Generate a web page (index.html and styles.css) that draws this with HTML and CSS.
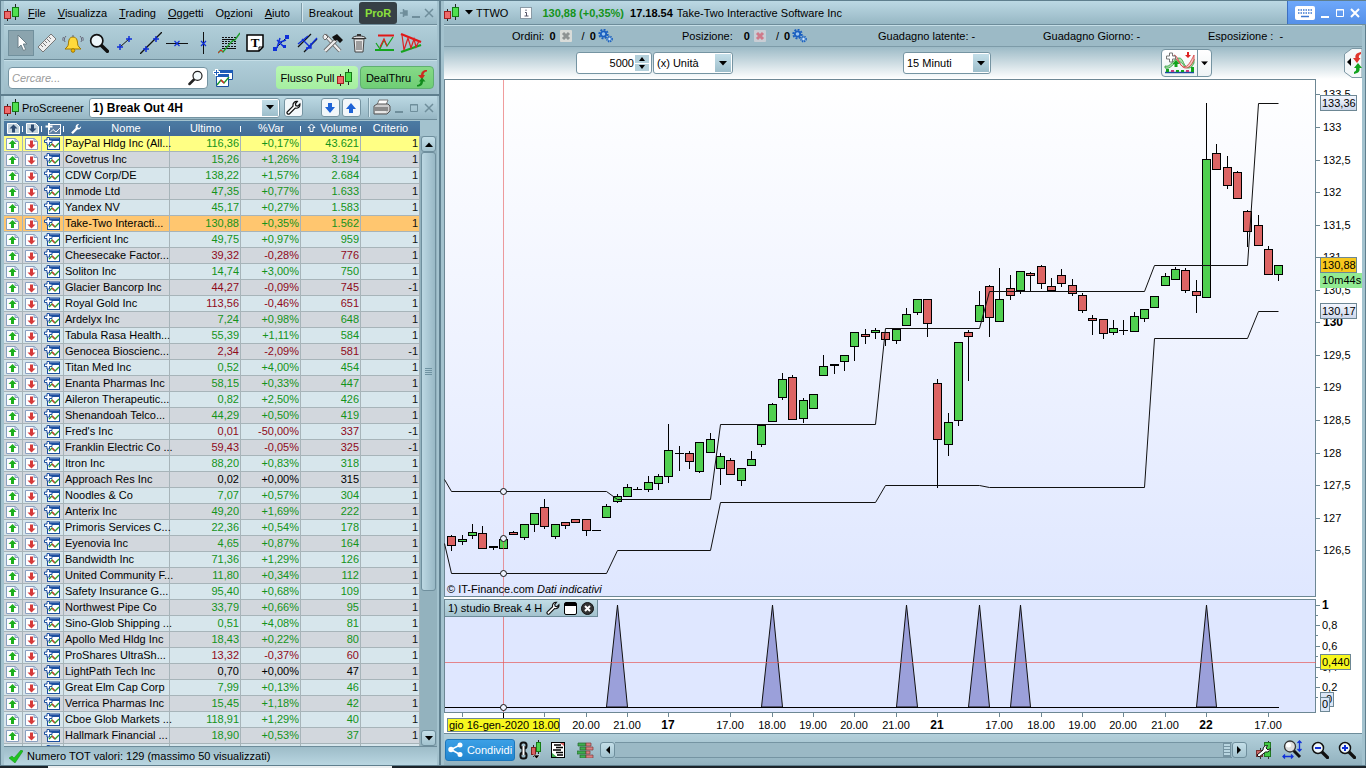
FILE: index.html
```html
<!DOCTYPE html>
<html lang="it">
<head>
  <meta charset="utf-8">
  <title>TTWO - Take-Two Interactive Software Inc</title>
  <link rel="stylesheet" href="styles.css">
</head>
<body>

  <!-- Icone condivise -->
  <svg class="defs" width="0" height="0">
    <symbol id="i-candles" viewBox="0 0 16 17">
      <path d="M3.500 5v12M11.500 0v16" stroke="#222"/>
      <rect x=".5" y="7.500" width="6" height="7" fill="#ef6a6a" stroke="#a02020"/>
      <rect x="8.500" y="3.500" width="6" height="9" fill="#4fe04f" stroke="#157a15"/>
    </symbol>
    <symbol id="i-up" viewBox="0 0 13 12">
      <path d="M.5.5h9l3 3v8H.5z" fill="#fff" stroke="#8aa0c0"/><path d="M9 .5v3h3.500" fill="#c8d6ea" stroke="#8aa0c0"/>
      <path d="M6.500 2l4 4H8v4H5V6H2.500z" fill="#1eae1e"/>
    </symbol>
    <symbol id="i-down" viewBox="0 0 13 12">
      <path d="M.5.5h9l3 3v8H.5z" fill="#fff" stroke="#8aa0c0"/><path d="M9 .5v3h3.500" fill="#c8d6ea" stroke="#8aa0c0"/>
      <path d="M6.500 10.500l4-4H8V2.500H5v4H2.500z" fill="#d63a3a"/>
    </symbol>
    <symbol id="i-add" viewBox="0 0 16 13">
      <rect x="3.500" y="1" width="12" height="11.500" fill="#fff" stroke="#1c4fa0"/>
      <path d="M4 1.500h11v2.500H4z" fill="#1c4fa0"/>
      <path d="M5 10l3-3 3 3 4-4" fill="none" stroke="#2aa02a" stroke-width="1.300"/><path d="M8 7l2.500 2.500" stroke="#d33" stroke-width="1.300"/>
      <path d="M3 .5h2.500v2.500H8v2.500H5.500V8H3V5.500H.5V3H3z" fill="#fff" stroke="#1c4fa0"/>
    </symbol>
    <symbol id="i-hup" viewBox="0 0 13 11">
      <path d="M.5.5h9l3 3v7H.5z" fill="#c3d3de" stroke="#fff"/><path d="M6.500 1.500l4 4H8v4H5v-4H2.500z" fill="#2c4a70"/>
    </symbol>
    <symbol id="i-hdown" viewBox="0 0 13 11">
      <path d="M.5.5h9l3 3v7H.5z" fill="#c3d3de" stroke="#fff"/><path d="M6.500 9.500l4-4H8v-4H5v4H2.500z" fill="#2c4a70"/>
    </symbol>
    <symbol id="i-hadd" viewBox="0 0 16 12">
      <rect x="3.500" y="1.500" width="12" height="10" fill="#5f7fa3" stroke="#fff"/>
      <path d="M5 9.500l3-3 3 2.500 4-4" fill="none" stroke="#fff"/><path d="M4 0v7M.5 3.500h7" stroke="#fff" stroke-width="2"/>
    </symbol>
    <symbol id="i-wrench" viewBox="0 0 16 16">
      <path d="M1.500 12.500l6-6C7 3.500 9 1.200 12 1.500L10 4l.5 2 2 .5 2.300-2.200C15.200 7 13 9.300 9.800 8.700l-6 6c-1.500 1.300-3.600-.7-2.300-2.200z" fill="#fff" stroke="#111" stroke-width="1.300"/>
    </symbol>
    <symbol id="i-lens" viewBox="0 0 18 18">
      <path d="M10.500 10.500l6 6" stroke="#111" stroke-width="3.200" stroke-linecap="round"/>
      <circle cx="7" cy="7" r="5.500" fill="#eef6fa" stroke="#111" stroke-width="1.500"/>
    </symbol>
    <symbol id="i-gears" viewBox="0 0 15 14">
      <circle cx="5.500" cy="5" r="4.300" fill="none" stroke="#1a5fc0" stroke-width="1.800" stroke-dasharray="2 1.300"/>
      <circle cx="5.500" cy="5" r="2.700" fill="#9cc6ef" stroke="#1a5fc0" stroke-width="1.800"/>
      <circle cx="11.500" cy="10" r="2.800" fill="none" stroke="#1a5fc0" stroke-width="1.200" stroke-dasharray="1.400 .9"/>
      <circle cx="11.500" cy="10" r="1.800" fill="#cfe6fa" stroke="#2a70cc"/>
    </symbol>
    <symbol id="i-caret" viewBox="0 0 8 5"><path d="M0 0h8L4 4.500z" fill="#000"/></symbol>
    <symbol id="i-redgreen" viewBox="0 0 12 20">
      <path d="M11 2C7 2 5 4 5 7H2l4 4.500L9 7H7.500C7.500 5 9 3.500 11 3.500z" fill="#cc2a20"/>
      <path d="M1 18.500c4 0 6-2 6-5h2.500L6 9.500 3 13.500h1.500c0 2-1.500 3.500-3.500 3.500z" fill="#118a1c"/>
    </symbol>
  </svg>

  <div class="desk">
    <div class="left">

      <!-- Menu principale -->
      <section class="window main-win">
        <nav class="titlebar menu">
          <svg class="logo" width="16" height="17"><use href="#i-candles"/></svg>
          <button><u>F</u>ile</button>
          <button><u>V</u>isualizza</button>
          <button><u>T</u>rading</button>
          <button><u>O</u>ggetti</button>
          <button>O<u>p</u>zioni</button>
          <button><u>A</u>iuto</button>
          <span class="sep"></span>
          <button>Breakout</button>
          <button class="pror">ProR</button>
          <span class="wincontrols">
            <button aria-label="Blocca"><svg width="8" height="10"><path d="M0 5h3M3.500 1v8M4 3h3v4H4z" stroke="#6f8e9b" stroke-width="1.500" fill="#6f8e9b"/></svg></button>
            <button aria-label="Riduci"><svg width="10" height="10"><path d="M1 9h8" stroke="#6f8e9b" stroke-width="2"/></svg></button>
            <button aria-label="Chiudi"><svg width="10" height="10"><path d="M1 1l8 8M9 1l-8 8" stroke="#6f8e9b" stroke-width="1.500"/></svg></button>
          </span>
        </nav>

        <div class="toolbar">
          <button class="pressed" aria-label="Puntatore"><svg width="22" height="22"><path d="M8 3v13l3-3 2.500 5.500 2.200-1L13.300 12H17z" fill="#fff" stroke="#6b7f88"/></svg></button>
          <button aria-label="Righello"><svg width="22" height="22"><path d="M2 15L15 2l5 5L7 20z" fill="#eee" stroke="#777"/><path d="M5 13l2 2M7 11l3 3M9 9l2 2M11 7l3 3M13 5l2 2" stroke="#777"/></svg></button>
          <button aria-label="Allarme"><svg width="22" height="22"><path d="M5 15c2-2 1-4 2-7 1-4 7-4 8 0 1 3 0 5 2 7l2 2H3z" fill="#ffd93b" stroke="#a07800"/><circle cx="11" cy="18.500" r="1.800" fill="#f4b800" stroke="#a07800"/><path d="M11 3v2M4 4c-2 2-2 4-1 6M18 4c2 2 2 4 1 6M1.500 5c-1 2-1 3 0 4M20.500 5c1 2 1 3 0 4" fill="none" stroke="#667"/></svg></button>
          <button aria-label="Zoom"><svg width="20" height="20"><use href="#i-lens"/></svg></button>
          <button aria-label="Segmento"><svg width="22" height="22"><path d="M6 15l9-8" stroke="#111"/><path d="M3 15h6M6 12v6M12 7h6M15 4v6" stroke="#1030d8" stroke-width="1.500"/></svg></button>
          <button aria-label="Retta"><svg width="22" height="22"><path d="M0 22L22 0" stroke="#111" stroke-width="1.300"/><path d="M3 17h6M6 14v6M13 7h6M16 4v6" stroke="#1030d8" stroke-width="1.500"/></svg></button>
          <button aria-label="Linea orizzontale"><svg width="22" height="22"><path d="M0 11.500h22" stroke="#111"/><path d="M8.500 9l5 5M13.500 9l-5 5" stroke="#1030d8" stroke-width="1.200"/></svg></button>
          <button aria-label="Linea verticale"><svg width="22" height="22"><path d="M11.500 0v22" stroke="#111"/><path d="M9 9l5 5M14 9l-5 5" stroke="#1030d8" stroke-width="1.200"/></svg></button>
          <button aria-label="Fibonacci"><svg width="22" height="22"><path d="M4 5.500h15M4 9.500h14M4 11.500h14M4 14.500h14" stroke="#111" stroke-dasharray="2 1"/><path d="M4 7.500h14M4 16.500h14" stroke="#111"/><path d="M0 21l3-3 2 2 9-11 3-1 5-7" fill="none" stroke="#1e9e2a" stroke-width="1.400"/><path d="M0 21l3-3 2 2" fill="none" stroke="#d22"/></svg></button>
          <button aria-label="Testo"><svg width="18" height="18"><path d="M1 1h16v12l-4 4H1z" fill="#fff" stroke="#000" stroke-width="1.500"/><path d="M17 13h-4v4" stroke="#000" fill="none"/><text x="9" y="13" class="ttool">T</text></svg></button>
          <button aria-label="Proiezione"><svg width="22" height="22"><path d="M5 17L17 5" stroke="#111"/><path d="M7 8l7 7M10 6l-3 10M16 8l-8 3" stroke="#1030d8" stroke-width="1.500"/><path d="M3 15h4v4H3zM15 3h4v4h-4zM13 13h3v3h-3z" fill="#1030d8"/></svg></button>
          <button aria-label="Canale"><svg width="22" height="22"><path d="M2 15L15 2M8 20L21 7" stroke="#111" stroke-width="1.300"/><path d="M2 12L12 4M10 18L21 6M6 7l9 9M15 11v5h-5" stroke="#1030d8" stroke-width="1.400" fill="none"/></svg></button>
          <button aria-label="Strumenti"><svg width="22" height="22"><path d="M3 3l15 16" stroke="#666" stroke-width="4"/><path d="M3 3l15 16" stroke="#eee" stroke-width="2.400"/><path d="M3 2l3 3-3 3C0 6 1 3 3 2z" fill="#eee" stroke="#666"/><path d="M3 19L14 8" stroke="#666" stroke-width="4"/><path d="M3 19L14 8" stroke="#eee" stroke-width="2.400"/><path d="M10 5l5-3 6 6-3 3-3-3-2 1z" fill="#111"/></svg></button>
          <button aria-label="Elimina"><svg width="20" height="22"><path d="M5 7h10l-1 13H6z" fill="#e8e8e8" stroke="#444"/><path d="M3 6.500C4 3 16 3 17 6.500z" fill="#ddd" stroke="#333"/><path d="M8 9v9M10 9v9M12 9v9" stroke="#555"/><path d="M8 3h4" stroke="#333" stroke-width="2"/></svg></button>
          <button aria-label="Supporti e resistenze"><svg width="22" height="22"><path d="M4 3.500h16" stroke="#e01818" stroke-width="2"/><path d="M1 18h19" stroke="#14a51e" stroke-width="2"/><path d="M2 11l4 6 4-9 3 6 6-9" fill="none" stroke="#14a51e" stroke-width="1.200"/><path d="M6 15l4-8 3 7" fill="none" stroke="#d22" stroke-width="1.200"/></svg></button>
          <button aria-label="Figure"><svg width="22" height="22"><path d="M1 2l20 8" stroke="#e01818" stroke-width="2.200"/><path d="M1 20l20-7" stroke="#14a51e" stroke-width="2.200"/><path d="M2 3l2 15 4-12 3 10 3-9 2 8 3-6" fill="none" stroke="#d22" stroke-width="1.200"/></svg></button>
        </div>

        <div class="searchrow">
          <div class="search">
            <input type="text" placeholder="Cercare..." aria-label="Cercare">
            <svg width="16" height="16" viewBox="0 0 16 16"><path d="M6 9.500L1.500 14" stroke="#222" stroke-width="2.500" stroke-linecap="round"/><circle cx="9.500" cy="5.800" r="4.500" fill="#f4fafc" stroke="#222" stroke-width="1.200"/></svg>
          </div>
          <button class="plain" aria-label="Aggiungi finestra"><svg width="21" height="18" viewBox="0 0 21 18"><path d="M6.500 1.500h13v9h-13z" fill="#fff" stroke="#1c4fa0"/><path d="M6 1h14v3H6z" fill="#1c5cb8"/><path d="M3.500 5.500h12v12h-12z" fill="#fff" stroke="#1c4fa0"/><path d="M3 5h13v3H3z" fill="#1c5cb8"/><path d="M4 16l4-5 3 3 5-6" fill="none" stroke="#1a9a2a" stroke-width="1.400"/><path d="M8 11l3 3" stroke="#d22" stroke-width="1.400"/><path d="M3.500 0v7M0 3.500h7" stroke="#fff" stroke-width="3"/><path d="M3.500 1v5M1 3.500h5" stroke="#1c5cb8"/></svg></button>
          <button class="green flusso">Flusso Pull <svg width="16" height="17"><use href="#i-candles"/></svg></button>
          <button class="green deal">DealThru <svg width="12" height="20"><use href="#i-redgreen"/></svg></button>
        </div>
      </section>

      <!-- ProScreener -->
      <section class="window screener">
        <div class="titlebar">
          <svg class="logo" width="16" height="17"><use href="#i-candles"/></svg>
          <label for="screen">ProScreener</label>
          <span class="combo big">
            <select id="screen"><option>1) Break Out 4H</option></select>
            <span class="arrow"><svg width="8" height="5"><use href="#i-caret"/></svg></span>
          </span>
          <button class="sq" aria-label="Impostazioni"><svg width="15" height="15"><use href="#i-wrench"/></svg></button>
          <button class="sq first" aria-label="Esporta"><svg width="12" height="12"><path d="M4 1h4v4h3l-5 6-5-6h3z" fill="#1e63d6"/></svg></button>
          <button class="sq" aria-label="Importa"><svg width="12" height="12"><path d="M4 11h4V7h3L6 1 1 7h3z" fill="#1e63d6"/></svg></button>
          <span class="sep"></span>
          <button class="plain" aria-label="Stampa"><svg width="19" height="17"><path d="M5 6L7 1h9l-2 5z" fill="#fff" stroke="#777"/><path d="M2 7l3-2h11l2 2v5l-3 3H2z" fill="#ccc" stroke="#555"/><path d="M2 8h14v4H2z" fill="#8a8a8a"/><path d="M3 13h11" stroke="#fff"/></svg></button>
          <span class="wincontrols">
            <button aria-label="Riduci"><svg width="10" height="10"><path d="M1 9h8" stroke="#6f8e9b" stroke-width="2"/></svg></button>
            <button aria-label="Ingrandisci"><svg width="10" height="10"><path d="M1.500 1.500h7v7h-7zM1 2h8" stroke="#6f8e9b" fill="none"/></svg></button>
            <button aria-label="Chiudi"><svg width="10" height="10"><path d="M1 1l8 8M9 1l-8 8" stroke="#6f8e9b" stroke-width="1.500"/></svg></button>
          </span>
        </div>

        <div class="grid">
          <div class="tablebox">
            <table>
              <colgroup><col class="c1"><col class="c2"><col class="c3"><col class="c4"><col class="c5"><col class="c6"><col class="c7"><col class="c8"></colgroup>
              <thead>
                <tr>
                  <th><svg width="13" height="11"><use href="#i-hup"/></svg></th>
                  <th><svg width="13" height="11"><use href="#i-hdown"/></svg></th>
                  <th><svg width="16" height="12"><use href="#i-hadd"/></svg></th>
                  <th><svg class="hw" width="12" height="12" viewBox="0 0 16 16"><path d="M1.500 12.500l6-6C7 3.500 9 1.200 12 1.500L10 4l.5 2 2 .5 2.300-2.200C15.200 7 13 9.300 9.800 8.700l-6 6z" fill="#fff"/></svg>Nome</th>
                  <th>Ultimo</th>
                  <th>%Var</th>
                  <th><svg class="hs" width="9" height="10"><path d="M4.500 1L8 4.500H6v4H3v-4H1z" fill="none" stroke="#fff"/></svg>Volume</th>
                  <th>Criterio</th>
                </tr>
              </thead>
              <tbody id="rows"></tbody>
            </table>
          </div>
          <div class="vscroll">
            <button aria-label="Su"><svg width="8" height="5"><path d="M0 5h8L4 .5z"/></svg></button>
            <div class="thumb"><svg width="7" height="7"><path d="M0 .5h7M0 2.500h7M0 4.500h7M0 6.500h7" stroke="#6f93a2"/></svg></div>
            <button class="dn" aria-label="Giù"><svg width="8" height="5"><use href="#i-caret"/></svg></button>
          </div>
        </div>

        <div class="status">
          <svg width="14" height="13"><path d="M0 8l3-2 2 2 7-8 2 1-8 12z" fill="#1fc41f" stroke="#0d8a12" stroke-width=".5"/></svg>
          Numero TOT valori: 129 (massimo 50 visualizzati)
        </div>
      </section>
    </div>

    <!-- Grafico -->
    <section class="window chart">
      <div class="titlebar">
        <svg class="logo" width="16" height="17"><use href="#i-candles"/></svg>
        <svg class="tcaret" width="8" height="5"><use href="#i-caret"/></svg>
        <span class="ticker">TTWO</span>
        <svg class="info" width="12" height="12"><rect x=".5" y=".5" width="11" height="11" fill="#fff" stroke="#8a9aa5"/><path d="M5 5.500h1.500V9M4.500 9h4M6 2.500v1.500" stroke="#556" fill="none"/></svg>
        <b class="last">130,88 (+0,35%)</b>
        <b class="time">17.18.54</b>
        <span>Take-Two Interactive Software Inc</span>
        <span class="appcontrols">
          <button aria-label="Tastiera"><svg width="20" height="14"><rect width="20" height="14" rx="2" fill="#fff"/><path d="M3 4h14M3 7h14" stroke="#3d78d0" stroke-width="1.500" stroke-dasharray="1.500 1"/><path d="M6 10.500h8" stroke="#3d78d0" stroke-width="1.500"/></svg></button>
          <button aria-label="Riduci"><svg width="10" height="10"><path d="M1 9h8" stroke="#fff" stroke-width="2"/></svg></button>
          <button aria-label="Ingrandisci"><svg width="10" height="10"><path d="M1.500 1.500h7v7h-7zM1 2h8" stroke="#fff" fill="none"/></svg></button>
          <button aria-label="Chiudi"><svg width="10" height="10"><path d="M1 1l8 8M9 1l-8 8" stroke="#fff" stroke-width="2"/></svg></button>
        </span>
      </div>

      <div class="inforow">
        <div>Ordini: <b class="n1">0</b><svg width="12" height="12"><rect width="12" height="12" rx="1" fill="#d9dcd9"/><path d="M3 3l6 6M9 3l-6 6" stroke="#8f9494" stroke-width="3"/></svg><span class="slash">/</span><b>0</b><svg class="gear" width="15" height="14"><use href="#i-gears"/></svg></div>
        <div>Posizione: <b class="n2">0</b><svg width="12" height="12"><rect width="12" height="12" rx="1" fill="#c9cdd4"/><path d="M3 3l6 6M9 3l-6 6" stroke="#cf7a8a" stroke-width="3"/></svg><span class="slash">/</span><b>0</b><svg class="gear" width="15" height="14"><use href="#i-gears"/></svg></div>
        <div>Guadagno latente: -</div>
        <div>Guadagno Giorno: -</div>
        <div>Esposizione : &nbsp;-</div>
      </div>

      <div class="optrow">
        <span class="qty">
          <input type="text" value="5000" aria-label="Quantità">
          <span class="spin">
            <button aria-label="Più"><svg width="6" height="4"><path d="M0 4h6L3 0z"/></svg></button>
            <button aria-label="Meno"><svg width="6" height="4"><path d="M0 0h6L3 4z"/></svg></button>
          </span>
        </span>
        <span class="combo unit">
          <select aria-label="Unità"><option>(x) Unità</option></select>
          <span class="arrow"><svg width="8" height="5"><use href="#i-caret"/></svg></span>
        </span>
        <span class="combo tf">
          <select aria-label="Periodo"><option>15 Minuti</option></select>
          <span class="arrow"><svg width="8" height="5"><use href="#i-caret"/></svg></span>
        </span>
        <span class="indic">
          <button aria-label="Aggiungi indicatore"><svg width="31" height="22"><path d="M1 14c6 2 8-8 14-8 5 0 4 9 9 9 3 0 4-5 6-8v4c-2 4-3 5-6 5-5 0-4-6-9-6-6 0-8 8-14 6z" fill="#a9dfa9" stroke="#2a9a3a" stroke-width=".8"/><path d="M10 3c4 0 5 11 10 12 4 0 7-6 10-12v5c-3 6-5 8-9 8-5-1-7-10-11-10z" fill="#f6c2c2" stroke="#d23a3a" stroke-width=".8"/><path d="M5.500 1h3v3h3v3h-3v3h-3V7h-3V4h3z" fill="#fff" stroke="#777"/><path d="M12 8l3.500 4H13.500v3h-3v-3H8.500z" fill="#12a31e"/><path d="M24 6l-3-3h2V0h2v3h2z" fill="#d22"/><path d="M1 20.500h29" stroke="#1c4fa0" stroke-width="1.500"/><path d="M2 17h3v3H2zM12 18h3v2h-3zM17 18h3v2h-3zM27 15h3v5h-3z" fill="#12a31e"/><path d="M7 18h3v2H7zM22 18h3v2h-3z" fill="#c2387a"/></svg></button>
          <button class="more" aria-label="Altri indicatori"><svg width="7" height="5" viewBox="0 0 8 5"><use href="#i-caret"/></svg></button>
        </span>
        <button class="tab" aria-label="Apri pannello ordini"><svg width="18" height="30"><path d="M18 .5H8L.5 6v18L8 29.500h10z" fill="#f3f7f9" stroke="#7d98a5"/><path d="M7 10v8l-4-4z"/><path d="M17 4c-5 1-6 3-5.500 6H9l4 5 3.500-5H15c-.5-2 0-3 2-4z" fill="#e0352c"/><path d="M10 26c5-1 6-3 5.500-6H18l-4-5-4 5h2c.5 2 0 3-2 4z" fill="#12a31e"/></svg></button>
      </div>

      <svg class="price" id="price"></svg>
      <div class="study">
        <svg id="study"></svg>
        <div class="studytag">
          1) studio Break 4 H
          <button class="plain" aria-label="Modifica"><svg width="14" height="14"><use href="#i-wrench"/></svg></button>
          <button class="plain" aria-label="Finestra"><svg width="13" height="13"><rect x=".5" y=".5" width="12" height="12" rx="1.500" fill="#fff" stroke="#000"/><path d="M1 1h11v3H1z"/></svg></button>
          <button class="plain" aria-label="Rimuovi"><svg width="13" height="13"><circle cx="6.500" cy="6.500" r="6" fill="#333" stroke="#111"/><path d="M4 4l5 5M9 4l-5 5" stroke="#fff" stroke-width="2"/></svg></button>
        </div>
      </div>
      <svg class="times" id="times"></svg>

      <div class="bottombar">
        <button class="share"><svg width="15" height="15"><path d="M12 3L3 7.500l9 5" stroke="#fff" stroke-width="1.500" fill="none"/><circle cx="12" cy="3" r="2.500" fill="#fff"/><circle cx="3" cy="7.500" r="2.700" fill="#fff"/><circle cx="12" cy="12.500" r="2.500" fill="#fff"/></svg>Condividi</button>
        <button class="plain" aria-label="Collega"><svg width="24" height="20"><rect x="1.500" y="2.500" width="6" height="6" rx="2.500" fill="none" stroke="#111" stroke-width="2"/><rect x="1.500" y="12.500" width="6" height="6" rx="2.500" fill="none" stroke="#111" stroke-width="2"/><path d="M4.500 6v9" stroke="#fff" stroke-width="3"/><path d="M3 6v9M6 6v9" stroke="#111"/><path d="M14.500 5v12M19.500 0v14" stroke="#222"/><rect x="12.500" y="7.500" width="4" height="7" fill="#d96060" stroke="#802020"/><rect x="17.500" y="2.500" width="4" height="9" fill="#4fd04f" stroke="#157a15"/><path d="M14 15h7l-3.500 4z" fill="#000" stroke="#fff" stroke-width=".6"/></svg></button>
        <button class="plain" aria-label="Lista"><svg width="14" height="16"><rect x=".5" y=".5" width="13" height="15" fill="#fff" stroke="#000"/><path d="M3 3h7M5 5.500h7M2 8h8M5 10.500h7M6 13h6" stroke="#000" stroke-width="1.500"/><path d="M9 1h4v3z" fill="#d96060"/><path d="M1 11v4h5z" fill="#3fae4f"/></svg></button>
        <button class="plain book" aria-label="Book"><svg width="17" height="16"><path d="M1 1h8v3H1zM3 5h6v3H3zM0 9h9v3H0zM3 13h6v3H3z" fill="#3fae4f" stroke="#27632f" stroke-width=".7"/><path d="M9 1h5v3H9zM9 5h7v3H9zM9 9h4v3H9zM9 13h7v3H9z" fill="#d98080" stroke="#7d3a3a" stroke-width=".7"/></svg></button>
        <div class="hscroll">
          <button aria-label="Indietro"><svg width="5" height="8"><path d="M5 0v8L1 4z"/></svg></button>
          <div class="track"><span class="grip"></span></div>
          <button aria-label="Avanti"><svg width="5" height="8"><path d="M0 0v8l4-4z"/></svg></button>
        </div>
        <div class="zooms">
          <button aria-label="Stile grafico"><svg width="18" height="18"><path d="M5.500 7v11M13.500 0v18" stroke="#333"/><rect x="1.500" y="9.500" width="6" height="6" fill="#c66" stroke="#733"/><rect x="9.500" y="1.500" width="6" height="14" fill="#4c4" stroke="#272"/><path d="M2 14l6-5c0-3 2-5 4.500-4.500L11 7l2 2 2.500-1.500C15.500 10 13 11.500 10.500 11L4 16z" fill="#fff" stroke="#111"/></svg></button>
          <button aria-label="Zoom automatico"><svg width="20" height="19"><path d="M11 10l7 7" stroke="#111" stroke-width="3"/><circle cx="8" cy="6.500" r="5.500" fill="#ddd" stroke="#333" stroke-width="1.300"/><circle cx="6.500" cy="5" r="2.500" fill="#fff"/><path d="M17.500 1v10M15.500 3l2-2 2 2M15.500 9l2 2 2-2M1 16.500h10M3 14.500l-2 2 2 2M9 14.500l2 2-2 2" stroke="#1030d8" fill="none" stroke-width="1.300"/></svg></button>
          <button aria-label="Riduci zoom"><svg width="18" height="18"><use href="#i-lens"/><path d="M4 7h6" stroke="#1030d8" stroke-width="2"/></svg></button>
          <button aria-label="Aumenta zoom"><svg width="18" height="18"><use href="#i-lens"/><path d="M4 7h6M7 4v6" stroke="#1030d8" stroke-width="2"/></svg></button>
        </div>
      </div>
    </section>
  </div>
  <div class="taskbar"></div>

  <script src="script.js"></script>
</body>
</html>
```

FILE: styles.css
```css
* {
  box-sizing: border-box;
}

body {
  margin: 0;
  height: 100vh;
  display: flex;
  flex-direction: column;
  overflow: hidden;
  background: #9bb9c5;
  font-family: "Liberation Sans", Arial, sans-serif;
  font-size: 11px;
  color: #000;
}

button, input, select {
  font: inherit;
  color: inherit;
  margin: 0;
  padding: 0;
}

button {
  border: none;
  background: none;
  white-space: nowrap;
}

svg {
  display: block;
  flex: none;
}

.defs {
  position: absolute;
}

.desk {
  flex: 1;
  min-height: 0;
  display: flex;
}

.left {
  flex: 0 0 440px;
  min-width: 0;
  display: flex;
  flex-direction: column;
}

/* windows */
.window {
  border: 1px solid #5f7f8e;
  padding: 0 2px 0 3px;
  background: #a3c2ce;
  display: flex;
  flex-direction: column;
}

.main-win {
  height: 95px;
}

.screener {
  flex: 1;
  min-height: 0;
}

.chart {
  flex: 1;
  min-width: 0;
}

.titlebar {
  flex: none;
  display: flex;
  align-items: center;
  height: 24px;
  border-bottom: 1px solid #6d8c9a;
  background: linear-gradient(#bcd9e4, #97b7c4);
}

.logo {
  margin-right: 2px;
}

.sep {
  width: 2px;
  height: 19px;
  background: #7d9ba8;
  border-right: 1px solid #d5e8ef;
}

.wincontrols {
  display: flex;
  gap: 5px;
  margin-left: auto;
  margin-right: 3px;
}

/* menu */
.menu button {
  margin-left: 6px;
  margin-right: 6px;
}

.menu .sep {
  margin-left: 5px;
}

.menu .pror {
  width: 38px;
  height: 22px;
  margin: 0;
  border-radius: 3px;
  background: #363f45;
  color: #8be03c;
  font-weight: bold;
  text-align: left;
  padding-left: 6px;
}

.menu .wincontrols {
  gap: 3px;
}

.menu .wincontrols button {
  margin: 0;
}

.toolbar {
  display: flex;
  height: 35px;
  align-items: center;
  padding-left: 4px;
  border-top: 1px solid #c5dee7;
  border-bottom: 1px solid #6d8c9a;
  background: linear-gradient(#b0ced9, #9dbcc8);
}

.toolbar button {
  width: 26px;
  height: 26px;
  display: flex;
  align-items: center;
  justify-content: center;
}

.toolbar .pressed {
  background: #8ba4ae;
  border: 1px solid #71909d;
}

.ttool {
  font-family: "Liberation Serif", serif;
  font-size: 13px;
  font-weight: bold;
  text-anchor: middle;
}

.searchrow {
  flex: 1;
  display: flex;
  align-items: center;
  padding-left: 4px;
  border-top: 1px solid #c5dee7;
  background: linear-gradient(#b0ced9, #9dbcc8);
}

.search {
  display: flex;
  align-items: center;
  width: 200px;
  height: 22px;
  margin-right: 5px;
  padding: 0 3px;
  border: 1px solid #7594a2;
  border-radius: 4px;
  background: #fff;
}

.search input {
  flex: 1;
  min-width: 0;
  border: none;
  outline: none;
  background: none;
}

.search input::placeholder {
  color: #9a9a9a;
  font-style: italic;
}

.green {
  display: flex;
  align-items: center;
  justify-content: center;
  height: 23px;
  border-radius: 4px;
}

.flusso {
  width: 82px;
  gap: 3px;
  margin-left: auto;
  background: linear-gradient(#b9f7b3, #a5efa0);
}

.deal {
  width: 74px;
  gap: 5px;
  margin: 0 3px 0 2px;
  border: 1px solid #5fb070;
  background: linear-gradient(#86d987, #6fce75);
}

/* combo */
.combo {
  position: relative;
  display: block;
}

.combo select {
  appearance: none;
  width: 100%;
  height: 100%;
  padding: 0 20px 0 3px;
  border: 1px solid #7594a2;
  border-radius: 3px;
  background: #fff;
}

.arrow {
  position: absolute;
  top: 2px;
  right: 2px;
  bottom: 2px;
  width: 16px;
  display: flex;
  align-items: center;
  justify-content: center;
  background: linear-gradient(#c4dfe9, #9dbecb);
  pointer-events: none;
}

.big {
  width: 191px;
  height: 20px;
  margin: 0 4px 0 5px;
}

.big select {
  font-size: 12px;
  font-weight: bold;
}

.sq {
  display: flex;
  align-items: center;
  justify-content: center;
  width: 19px;
  height: 19px;
  margin-right: 2px;
  border: 1px solid #7594a2;
  border-radius: 3px;
  background: #f2f7fa;
}

.sq.first {
  margin-left: 16px;
}

.screener .sep {
  margin: 0 2px 0 5px;
}

/* table */
.grid {
  flex: 1;
  min-height: 0;
  display: flex;
  margin-top: 1px;
  border-bottom: 1px solid #6d8c9a;
}

.tablebox {
  flex: 1;
  overflow: hidden;
}

table {
  width: 100%;
  table-layout: fixed;
  border-collapse: separate;
  border-spacing: 0;
}

.c1 { width: 19px; }
.c2 { width: 19px; }
.c3 { width: 22px; }
.c4 { width: 106px; }
.c5 { width: 71px; }
.c6 { width: 60px; }
.c7 { width: 60px; }

th {
  height: 15px;
  padding: 0;
  background: linear-gradient(#4c7ba3, #426b97);
  color: #fff;
  font-weight: normal;
  line-height: 15px;
  position: relative;
}

th svg {
  margin: 0 auto;
}

th:not(:last-child)::after {
  content: "";
  position: absolute;
  right: 0;
  top: 5px;
  width: 1px;
  height: 6px;
  background: #fff;
}

th:nth-child(7) {
  padding-left: 15px;
}

th:nth-child(4) {
  padding-left: 18px;
}

th .hw,
th .hs {
  position: absolute;
  top: 2px;
  left: 6px;
}

td {
  height: 16px;
  padding: 0 1px 0 0;
  border-right: 1px solid #a7b4b9;
  border-bottom: 1px solid #a7b4b9;
  line-height: 15px;
  text-align: right;
  white-space: nowrap;
}

td svg {
  margin: 0 auto;
}

td:last-child {
  color: #111;
}

td.name {
  padding: 0 0 0 1px;
  text-align: left;
  color: #000;
}

tbody tr { background: #d7e6ec; }
tbody tr:nth-child(even) { background: #d2d7dd; }
tbody tr.first { background: #ffff84; }
tbody tr.sel { background: #ffc66f; }

.up { color: #14931a; }
.down { color: #8f0a1a; }

.vscroll {
  width: 17px;
  display: flex;
  flex-direction: column;
  margin-top: 15px;
  padding: 0 1px;
  background: #93b2be;
}

.vscroll button {
  height: 16px;
  display: flex;
  align-items: center;
  justify-content: center;
  border: 1px solid #6f8f9d;
  border-radius: 3px;
  background: linear-gradient(#c4dfe9, #a3c3cf);
}

.vscroll .dn {
  margin-top: auto;
}

.thumb {
  flex: 0 0 72%;
  display: flex;
  align-items: center;
  justify-content: center;
  border: 1px solid #6f8f9d;
  border-radius: 3px;
  background: linear-gradient(to right, #bcd8e3, #98b8c5);
}

.status {
  display: flex;
  align-items: center;
  gap: 4px;
  height: 18px;
  padding-left: 5px;
  background: linear-gradient(#9dbcc8, #b9d6e1);
}

/* chart window */
.chart {
  padding-right: 3px;
}

.chart > .titlebar {
  margin-right: -4px;
}

.tcaret {
  margin: 0 3px;
}

.info {
  margin: 0 10px 0 12px;
}

.last {
  color: #14931a;
  margin-right: 6px;
}

.time {
  margin-right: 4px;
}

.appcontrols {
  display: flex;
  align-items: center;
  gap: 5px;
  align-self: stretch;
  width: 79px;
  margin-left: auto;
  padding-left: 7px;
  border-left: 1px solid #3c6fc0;
  background: linear-gradient(#6ea8fb, #5590e8);
}

.inforow {
  flex: none;
  display: grid;
  grid-template-columns: 170fr 196fr 165fr 165fr 154fr;
  align-items: center;
  height: 22px;
  padding-left: 68px;
  border-top: 1px solid #c5dee7;
  border-bottom: 1px solid #7d9ba8;
  background: #9cbac6;
}

.inforow div {
  display: flex;
  align-items: center;
  white-space: pre;
}

.n1 { margin: 0 4px 0 2px; }
.n2 { margin: 0 4px 0 8px; }
.slash { margin: 0 5px 0 10px; }
.gear { margin-left: 2px; }

.optrow {
  flex: none;
  display: flex;
  align-items: center;
  height: 32px;
  padding-left: 132px;
  background: linear-gradient(#9cbac6, #fff);
}

.qty {
  display: flex;
  width: 76px;
  height: 22px;
  padding: 2px;
  border: 1px solid #7594a2;
  border-radius: 3px;
  background: #fff;
}

.qty input {
  flex: 1;
  min-width: 0;
  border: none;
  background: none;
  text-align: right;
}

.spin {
  display: flex;
  flex-direction: column;
  gap: 1px;
  width: 14px;
  margin-left: 1px;
}

.spin button {
  flex: 1;
  display: flex;
  align-items: center;
  justify-content: center;
  background: #b4d0db;
}

.unit {
  width: 80px;
  height: 22px;
  margin-left: 1px;
}

.tf {
  width: 88px;
  height: 22px;
  margin-left: 170px;
}

.indic {
  display: flex;
  height: 28px;
  margin-left: 170px;
  border: 1px solid #7594a2;
  border-radius: 4px;
  background: linear-gradient(#fff, #eef3f5);
}

.indic button {
  padding: 0 2px;
}

.indic .more {
  width: 14px;
  padding: 0 3px;
  border-left: 1px solid #7594a2;
}

.tab {
  margin-left: auto;
}

/* plots */
.price,
.study,
.times {
  width: 100%;
  min-height: 0;
  background: #fff;
}

.price {
  flex: 518;
  height: 0;
}

.study {
  flex: 116;
  position: relative;
}

.study > svg {
  position: absolute;
  width: 100%;
  height: 100%;
}

.times {
  flex: none;
  height: 20px;
}

.chart text {
  font-size: 11px;
}

.chart text.bold {
  font-size: 12px;
  font-weight: bold;
}

.chart text.it {
  font-style: italic;
}

.studytag {
  position: absolute;
  left: 1px;
  top: 3px;
  display: flex;
  align-items: center;
  gap: 4px;
  height: 17px;
  padding: 0 3px;
  border-right: 1px solid #6d8c9a;
  border-bottom: 1px solid #6d8c9a;
  background: linear-gradient(#c2dde6, #a3c2ce);
}

.bottombar {
  flex: none;
  display: flex;
  align-items: center;
  height: 32px;
  padding-right: 6px;
  border-top: 1px solid #6d8c9a;
  background: linear-gradient(#b3d0db, #92b2bf);
}

.share {
  display: flex;
  align-items: center;
  justify-content: center;
  gap: 4px;
  width: 70px;
  height: 22px;
  margin: 0 4px 0 1px;
  border: 1px solid #1c76bb;
  border-radius: 3px;
  background: linear-gradient(#3ba0e6, #2286cf);
  color: #fff;
}

.bottombar .plain {
  margin-right: 8px;
}

.bottombar .book {
  margin-left: 4px;
  margin-right: 6px;
}

.hscroll {
  flex: 1;
  display: flex;
  height: 16px;
  margin-right: 8px;
}

.hscroll button {
  width: 15px;
  display: flex;
  align-items: center;
  justify-content: center;
  border: 1px solid #6f8f9d;
  border-radius: 3px;
  background: linear-gradient(#c4dfe9, #a3c3cf);
}

.track {
  flex: 1;
  display: flex;
  border-top: 1px solid #7594a2;
  border-bottom: 1px solid #7594a2;
  background: #9bb9c5;
}

.grip {
  width: 8px;
  margin: 0 1px 0 auto;
  border: 1px solid #7594a2;
  background: repeating-linear-gradient(#b9d6e1, #b9d6e1 2px, #7594a2 2px, #7594a2 3px);
}

.zooms {
  display: flex;
  gap: 9px;
}

.taskbar {
  flex: none;
  height: 2px;
  background: linear-gradient(to right, #1c242a 48px, #eceff0 48px, #eceff0 392px, #1c242a 392px);
}
```

FILE: script.js
```js
const stocks = [
  ["PayPal Hldg Inc (All...", "116,36", "+0,17%", "43.621", 1],
  ["Covetrus Inc", "15,26", "+1,26%", "3.194", 1],
  ["CDW Corp/DE", "138,22", "+1,57%", "2.684", 1],
  ["Inmode Ltd", "47,35", "+0,77%", "1.633", 1],
  ["Yandex NV", "45,17", "+0,27%", "1.583", 1],
  ["Take-Two Interacti...", "130,88", "+0,35%", "1.562", 1],
  ["Perficient Inc", "49,75", "+0,97%", "959", 1],
  ["Cheesecake Factor...", "39,32", "-0,28%", "776", 1],
  ["Soliton Inc", "14,74", "+3,00%", "750", 1],
  ["Glacier Bancorp Inc", "44,27", "-0,09%", "745", -1],
  ["Royal Gold Inc", "113,56", "-0,46%", "651", 1],
  ["Ardelyx Inc", "7,24", "+0,98%", "648", 1],
  ["Tabula Rasa Health...", "55,39", "+1,11%", "584", 1],
  ["Genocea Bioscienc...", "2,34", "-2,09%", "581", -1],
  ["Titan Med Inc", "0,52", "+4,00%", "454", 1],
  ["Enanta Pharmas Inc", "58,15", "+0,33%", "447", 1],
  ["Aileron Therapeutic...", "0,82", "+2,50%", "426", 1],
  ["Shenandoah Telco...", "44,29", "+0,50%", "419", 1],
  ["Fred's Inc", "0,01", "-50,00%", "337", -1],
  ["Franklin Electric Co ...", "59,43", "-0,05%", "325", -1],
  ["Itron Inc", "88,20", "+0,83%", "318", 1],
  ["Approach Res Inc", "0,02", "+0,00%", "315", 1],
  ["Noodles & Co", "7,07", "+0,57%", "304", 1],
  ["Anterix Inc", "49,20", "+1,69%", "222", 1],
  ["Primoris Services C...", "22,36", "+0,54%", "178", 1],
  ["Eyenovia Inc", "4,65", "+0,87%", "164", 1],
  ["Bandwidth Inc", "71,36", "+1,29%", "126", 1],
  ["United Community F...", "11,80", "+0,34%", "112", 1],
  ["Safety Insurance G...", "95,40", "+0,68%", "109", 1],
  ["Northwest Pipe Co", "33,79", "+0,66%", "95", 1],
  ["Sino-Glob Shipping ...", "0,51", "+4,08%", "81", 1],
  ["Apollo Med Hldg Inc", "18,43", "+0,22%", "80", 1],
  ["ProShares UltraSh...", "13,32", "-0,37%", "60", 1],
  ["LightPath Tech Inc", "0,70", "+0,00%", "47", 1],
  ["Great Elm Cap Corp", "7,99", "+0,13%", "46", 1],
  ["Verrica Pharmas Inc", "15,45", "+1,18%", "42", 1],
  ["Cboe Glob Markets ...", "118,91", "+1,29%", "40", 1],
  ["Hallmark Financial ...", "18,90", "+0,53%", "37", 1],
  ["", "", "", "", ""]
];

function icon(id, w, h) {
  return `<td><svg width="${w}" height="${h}"><use href="#${id}"/></svg></td>`;
}

document.getElementById("rows").innerHTML = stocks.map((s, i) => {
  const dir = s[2][0] === "-" ? "down" : s[2] === "+0,00%" ? "" : "up";
  const row = i === 0 ? "first" : i === 5 ? "sel" : "";
  return `<tr class="${row} ${dir}">` +
    icon("i-up", 13, 12) + icon("i-down", 13, 12) + icon("i-add", 16, 13) +
    `<td class="name">${s[0].replace("&", "&amp;")}</td><td>${s[1]}</td><td>${s[2]}</td><td>${s[3]}</td><td>${s[4]}</td></tr>`;
}).join("");

// Candles: colour, body top, body bottom, high, low
const candles = [
  "r 536 545 535 550", "g 539 541 535 544", "g 532 535 524 538", "r 533 548 526 548", "g 546 547 546 549",
  "g 539 548 538 548", "r 532 534 531 534", "g 524 537 524 539", "g 513 524 513 531", "r 507 526 499 528",
  "g 524 536 524 538", "r 522 525 522 528", "r 519 522 519 522", "r 519 530 519 535", "g 530 530 530 530",
  "g 506 517 504 517", "g 496 501 494 502", "g 487 496 484 496", "g 489 489 487 489", "g 482 489 476 491",
  "g 476 483 474 489", "g 450 476 424 482", "g 453 453 446 470", "r 453 461 451 468", "g 442 471 442 472",
  "g 439 452 433 452", "g 456 468 453 484", "r 460 474 458 474", "g 468 480 468 485", "g 459 465 451 465",
  "g 425 444 425 446", "g 404 421 403 421", "g 379 397 373 399", "r 377 419 375 419", "g 400 418 398 422",
  "g 394 408 394 408", "g 366 375 355 375", "g 364 365 364 373", "g 355 361 355 370", "g 332 346 332 360",
  "r 334 336 329 343", "g 330 332 328 338", "r 332 339 332 345", "g 329 340 329 343", "g 314 325 308 325",
  "g 299 312 299 314", "r 299 323 299 336", "r 383 439 379 487", "g 422 444 413 455", "g 342 420 342 425",
  "r 332 336 330 380", "g 305 321 291 321", "r 286 317 285 336", "g 299 321 268 321", "r 288 295 275 299",
  "g 271 290 271 293", "r 273 275 272 290", "r 266 283 265 288", "r 286 290 278 290", "r 275 283 269 286",
  "r 285 293 279 295", "r 295 310 293 312", "r 318 320 315 334", "r 319 333 319 338", "g 328 332 320 334",
  "g 330 330 320 334", "g 316 331 312 331", "g 309 318 309 321", "g 296 307 296 307", "g 276 285 273 285",
  "g 269 279 267 279", "r 270 290 268 292", "r 291 295 280 312", "g 159 297 103 297", "r 153 169 144 169",
  "r 167 185 156 188", "r 172 198 171 198", "r 211 231 210 246", "r 225 245 215 245", "r 249 274 246 274",
  "g 265 274 265 280"
];

// Bands: bar index, level
const upper = [[-0.7, 479], [0, 491], [15, 491], [16, 499], [25, 499], [26, 424], [41, 424], [42, 328], [51, 328],
  [52, 291], [67, 291], [68, 265], [77, 265], [78, 103], [80, 103]];
const lower = [[-0.7, 543], [0, 573], [15, 573], [16, 550], [25, 550], [26, 502], [41, 502], [42, 485], [51, 485],
  [52, 487], [67, 487], [68, 338], [77, 338], [78, 311], [80, 311]];
const signals = [16, 31, 44, 51, 55, 73];
const hours = [[1, ""], [9, ""], [13, "20.00"], [17, "21.00"], [21, "17"], [27, "17.00"], [31, "18.00"], [35, "19.00"],
  [39, "20.00"], [43, "21.00"], [47, "21"], [53, "17.00"], [57, "18.00"], [61, "19.00"], [65, "20.00"], [69, "21.00"],
  [73, "22"], [79, "17.00"]];

const AXIS = 47;
const GREY = "#6d8794";

function text(x, y, s, cls, anchor) {
  return `<text x="${x}" y="${y}" class="${cls || ""}" text-anchor="${anchor || "start"}">${s}</text>`;
}

function rect(x, y, w, h, fill, stroke) {
  const o = stroke ? 0.5 : 0;
  return `<rect x="${x + o}" y="${y + o}" width="${w - 2 * o}" height="${h - 2 * o}" fill="${fill}"` +
    (stroke ? ` stroke="${stroke}"` : "") + "/>";
}

function tag(x, y, w, h, fill, s) {
  return rect(x, y, w, h, fill, GREY) + text(x + 2, y + h - 4, s);
}

function ring(x, y) {
  return `<circle cx="${x + 0.5}" cy="${y + 0.5}" r="3" fill="#eef3ff" stroke="#111"/>`;
}

function drawPrice(el) {
  const W = el.clientWidth - AXIS, H = el.clientHeight;
  const X = i => Math.round((7.3 + i * 10.338) * W / 871);
  const Y = v => Math.round((v - 79) * H / 518);
  const line = pts => `<polyline fill="none" stroke="#111" points="${pts.map(p => `${X(p[0]) + 0.5},${Y(p[1]) + 0.5}`).join(" ")}"/>`;
  let s = `<defs><linearGradient id="bg" x2="0" y2="1"><stop offset="0" stop-color="#fff"/><stop offset="1" stop-color="#dfe7ff"/></linearGradient></defs>`;
  s += rect(0, 0, W + 1, H, "url(#bg)", GREY);
  candles.forEach((c, i) => {
    const [col, t, b, hi, lo] = c.split(" ");
    const x = X(i);
    s += rect(x, Y(hi), 1, Y(lo) - Y(hi) + 1, "#000");
    const h = Y(b) - Y(t) + 1;
    s += h < 3 ? rect(x - 4, Y(t), 9, h, "#000") : rect(x - 4, Y(t), 9, h, col === "r" ? "#dc6464" : "#50d050", "#000");
  });
  s += line(upper) + line(lower);
  s += rect(X(5), 1, 1, H - 2, "rgba(230,90,90,.6)");
  s += ring(X(5), Y(491)) + ring(X(5), Y(538)) + ring(X(5), Y(573));
  s += text(3, H - 4, "© IT-Finance.com") + text(93, H - 4, "Dati indicativi", "it");
  for (let k = 0; k < 15; k++) {
    const v = 133.5 - k * 0.5;
    const y = Y(127 + (133 - v) * 65.1);
    s += rect(W + 1, y, 4, 1, GREY);
    s += text(W + 8, y + 4, String(v).replace(".", ","), v === 130 ? "bold" : "");
  }
  s += `<defs><linearGradient id="tg" x2="0" y2="1"><stop offset="0" stop-color="#f4f7ff"/><stop offset="1" stop-color="#ccd6ea"/></linearGradient></defs>`;
  s += tag(W + 5, Y(95), 37, 16, "url(#tg)", "133,36");
  s += tag(W + 5, Y(257), 37, 16, "#f7c81e", "130,88");
  s += tag(W + 5, Y(303), 37, 16, "url(#tg)", "130,17");
  s += rect(W + 5, Y(273), 42, 15, "#92ea92") + text(W + 7, Y(273) + 11, "10m44s");
  el.innerHTML = s;
}

function drawStudy(el) {
  const W = el.clientWidth - AXIS, H = el.clientHeight;
  const X = i => Math.round((7.3 + i * 10.338) * W / 871);
  const Y = v => Math.round((v - 597) * H / 116);
  let s = rect(0, 2, W + 1, H - 2, "#dfe7ff", GREY);
  signals.forEach(i => {
    s += `<path d="M${X(i - 1) + 0.5} ${Y(707)}L${X(i) + 0.5} ${Y(605)}L${X(i + 1) + 0.5} ${Y(707)}z" fill="#9ba0da" stroke="#111"/>`;
  });
  s += rect(1, Y(707), X(80), 1, "#000");
  s += rect(1, Y(662), W, 1, "rgba(230,90,90,.7)");
  s += rect(X(5), 3, 1, H - 4, "rgba(230,90,90,.7)");
  s += ring(X(5), Y(707));
  [["1", 605], ["0,8", 625], ["0,6", 646], ["0,4", 667], ["0,2", 687]].forEach((l, i) => {
    s += rect(W + 1, Y(l[1]), 4, 1, GREY) + rect(W + 1, Y(l[1] + 10), 2, 1, GREY);
    s += text(W + 7, Y(l[1]) + 4, l[0], i === 0 ? "bold" : "");
  });
  s += tag(W + 5, Y(654), 31, 16, "#f7f71e", "0,440");
  s += rect(W + 5, Y(692), 14, 15, "#dbe6f6", GREY) + text(W + 11, Y(703), "0");
  s += tag(W + 5, Y(697), 10, 15, "#dbe6f6", "0");
  el.innerHTML = s;
}

function drawTimes(el) {
  const W = el.clientWidth - AXIS;
  const X = i => Math.round((7.3 + i * 10.338) * W / 871);
  let s = "";
  hours.forEach(h => {
    const day = h[1].length === 2;
    s += rect(X(h[0]), 0, 1, 4, GREY) + text(X(h[0]), 16, h[1], day ? "bold" : "", "middle");
  });
  s += rect(X(5), 0, 1, 5, "#000");
  s += rect(3, 5, 113, 14, "#f7f71e", GREY) + text(5, 16, "gio 16-gen-2020 18.00");
  el.innerHTML = s;
}

function draw() {
  drawPrice(document.getElementById("price"));
  drawStudy(document.getElementById("study"));
  drawTimes(document.getElementById("times"));
}

window.addEventListener("resize", draw);
draw();
```
